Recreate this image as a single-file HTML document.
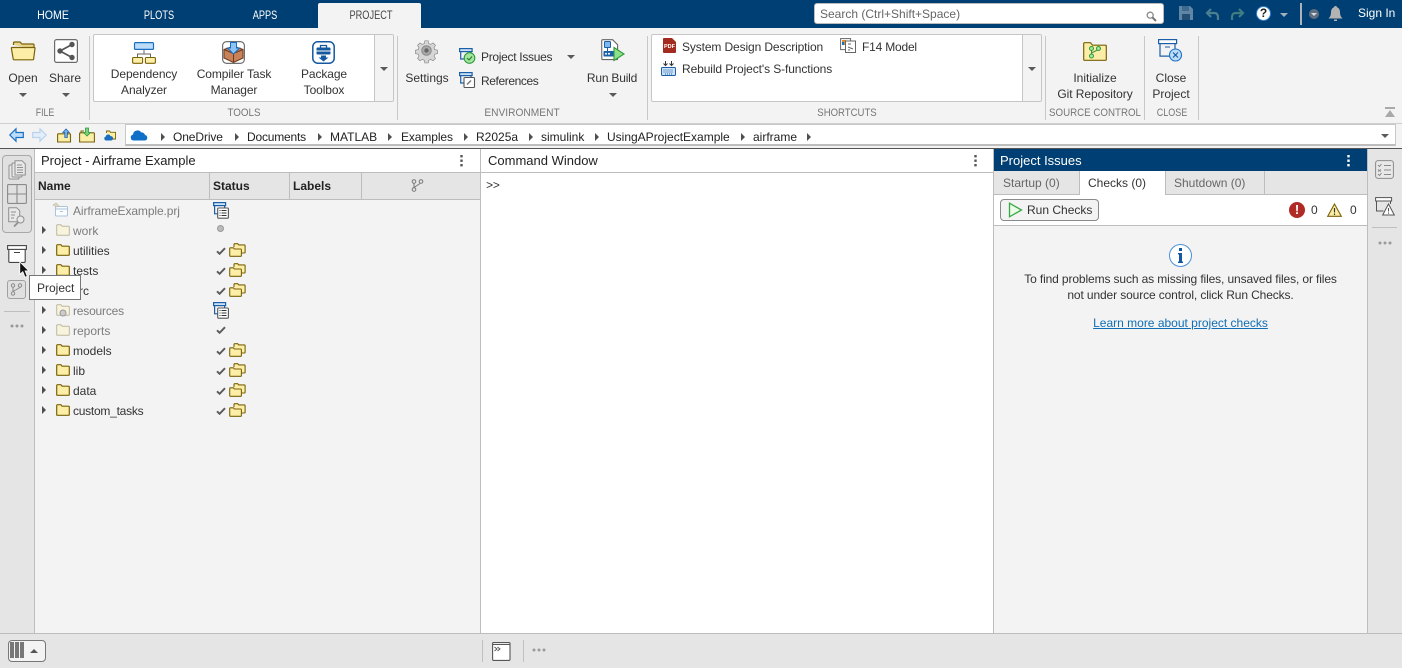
<!DOCTYPE html>
<html><head><meta charset="utf-8">
<style>
*{box-sizing:border-box}
html,body{margin:0;padding:0;width:1402px;height:668px;overflow:hidden;background:#f3f3f3;font-family:"Liberation Sans",sans-serif;font-size:12px;color:#333}
.a{position:absolute}
.t{position:absolute;white-space:nowrap;line-height:16px;height:16px}
.c{transform:translateX(-50%);text-align:center}
.g{color:#5f5f5f}
.d{color:#7c7c7c}
.tab{color:#fff;font-size:11.5px;top:8px}
.sec{top:105px;font-size:11px;color:#777}
.h{font-size:13px;color:#222}
svg{position:absolute;overflow:visible}
.tri{position:absolute;width:0;height:0;border-left:4px solid transparent;border-right:4px solid transparent;border-top:4px solid #5a5a5a}
.sep{position:absolute;width:1px;background:#c8c8c8}
.arr{position:absolute;width:0;height:0;border-top:4px solid transparent;border-bottom:4px solid transparent;border-left:4px solid #4f4f4f}
.col{position:absolute;top:173px;width:1px;height:26px;background:#bdbdbd}
</style></head>
<body>
<svg width="0" height="0" style="position:absolute">
<defs>
<symbol id="folder" viewBox="0 0 14 12"><path d="M.7 11.300V1.600c0-.5.3-.9.8-.9h3.400l1.200 1.500h6.400c.5 0 .8.300.8.800v7.500c0 .5-.3.800-.8.800H1.400c-.4 0-.7-.2-.7-.6z" fill="#fdeea7" stroke="#7a6208" stroke-width="1.200"/></symbol>
<symbol id="folderg" viewBox="0 0 14 12"><path d="M.7 11.300V1.600c0-.5.3-.9.8-.9h3.400l1.200 1.500h6.400c.5 0 .8.300.8.800v7.500c0 .5-.3.800-.8.800H1.400c-.4 0-.7-.2-.7-.6z" fill="#f8f3dc" stroke="#bdb89f" stroke-width="1"/></symbol>
<symbol id="dbl" viewBox="0 0 17 14"><path d="M5 4V1.500c0-.4.3-.8.7-.8h3l1 1.200h5.600c.5 0 .8.300.8.800v6.600c0 .4-.3.700-.8.700H13" fill="#fdeea7" stroke="#7a6208" stroke-width="1.100"/><path d="M.7 12.600V5.500c0-.4.3-.7.700-.7h3l1 1.200h6.200c.5 0 .8.300.8.800v5.800c0 .4-.3.700-.8.700H1.400c-.4 0-.7-.2-.7-.7z" fill="#fdeea7" stroke="#7a6208" stroke-width="1.100"/></symbol>
<symbol id="chk" viewBox="0 0 10 8"><path d="M1 4.300l2.600 2.500L9 1.200" fill="none" stroke="#5a5a5a" stroke-width="1.900"/></symbol>
<symbol id="stat" viewBox="0 0 16 17"><rect x=".6" y=".6" width="12" height="3" fill="#cfe3f7" stroke="#1b5fa8" stroke-width="1.200"/><path d="M1.600 3.600v8.200h4" fill="none" stroke="#1b5fa8" stroke-width="1.200"/><path d="M11.600 3.600v2" fill="none" stroke="#1b5fa8" stroke-width="1.200"/><rect x="4.700" y="6" width="10.700" height="10.200" rx="1" fill="#fff" stroke="#555" stroke-width="1.100"/><path d="M6.500 8.500h1M8.500 8.500h5M6.500 11h1M8.500 11h5M6.500 13.500h1M8.500 13.500h5" stroke="#333" stroke-width="1"/></symbol>
<symbol id="dots" viewBox="0 0 14 4"><circle cx="2" cy="2" r="1.500" fill="#9a9a9a"/><circle cx="7" cy="2" r="1.500" fill="#9a9a9a"/><circle cx="12" cy="2" r="1.500" fill="#9a9a9a"/></symbol>
</defs>
</svg>

<!-- top bar -->
<div class="a" style="left:0;top:0;width:1402px;height:28px;background:#003f73"></div>
<div class="a" style="left:318px;top:3px;width:103px;height:25px;background:#f3f3f3;border-radius:2px 2px 0 0"></div>
<div class="t tab" style="left:53px;transform:translateX(-50%) scaleX(.92)">HOME</div>
<div class="t tab" style="left:159px;transform:translateX(-50%) scaleX(.8)">PLOTS</div>
<div class="t tab" style="left:265px;transform:translateX(-50%) scaleX(.8)">APPS</div>
<div class="t tab" style="left:371px;color:#444;transform:translateX(-50%) scaleX(.8)">PROJECT</div>
<div class="a" style="left:814px;top:3px;width:350px;height:21px;background:#fff;border:1px solid #bbb;border-radius:3px"></div>
<div class="t" style="left:820px;top:6px;color:#666">Search (Ctrl+Shift+Space)</div>
<svg style="left:1146px;top:11px" width="11" height="11" viewBox="0 0 11 11"><circle cx="4.200" cy="4.200" r="3" fill="none" stroke="#8a8a8a" stroke-width="1.300"/><path d="M6.500 6.500l3.500 3.500" stroke="#777" stroke-width="2"/></svg>
<svg style="left:1179px;top:6px" width="14" height="14" viewBox="0 0 14 14"><path d="M0 0h11l3 3v11H0z" fill="#5f86a5"/><rect x="3" y="0" width="7" height="5" fill="#3e6a8f"/><rect x="3" y="8" width="8" height="6" fill="#234f77"/></svg>
<svg style="left:1206px;top:8px" width="14" height="13" viewBox="0 0 14 13"><path d="M5 1L1 5l4 4" fill="none" stroke="#4a7f90" stroke-width="2.200"/><path d="M2 5h6c3 0 4 2 4 4v3" fill="none" stroke="#4a7f90" stroke-width="2.200"/></svg>
<svg style="left:1230px;top:8px" width="14" height="13" viewBox="0 0 14 13"><path d="M9 1l4 4-4 4" fill="none" stroke="#3f7d80" stroke-width="2.200"/><path d="M12 5H6C3 5 2 7 2 9v3" fill="none" stroke="#3f7d80" stroke-width="2.200"/></svg>
<div class="a" style="left:1256px;top:6px;width:15px;height:15px;border-radius:50%;background:#fff;border:1.500px solid #2f7fd0;color:#222;font-weight:bold;font-size:12px;line-height:12px;text-align:center">?</div>
<div class="tri" style="left:1280px;top:13px;border-top-color:#9fb0be"></div>
<div class="a" style="left:1300px;top:3px;width:2px;height:22px;background:#a9b4bd"></div>
<div class="a" style="left:1309px;top:9px;width:10px;height:10px;border-radius:50%;background:#5f6f80"></div>
<div class="tri" style="left:1311px;top:13px;border-left-width:3px;border-right-width:3px;border-top:3px solid #d8dde2"></div>
<svg style="left:1328px;top:6px" width="15" height="15" viewBox="0 0 15 15"><path d="M7.500 0c1 0 1.500.7 1.500 1.300C11 2 12 4 12 6.500c0 2.500.8 4.500 2.500 6H.5C2.200 11 3 9 3 6.500 3 4 4 2 6 1.300 6 .7 6.500 0 7.500 0z" fill="#b3b3b3"/><path d="M6 13.500h3V15H6z" fill="#b3b3b3"/></svg>
<div class="t" style="left:1358px;top:5px;color:#fff">Sign In</div>

<!-- ribbon -->
<svg style="left:11px;top:41px" width="25" height="20" viewBox="0 0 25 20"><path d="M2.500 4V2c0-.6.400-1 1-1h5.500l2 2h11c.600 0 1 .4 1 1v4" fill="#e8d68e" stroke="#7a6208" stroke-width="1.200"/><path d="M.8 6.500h22.400c.5 0 .8.300.8.800L22.600 18c0 .5-.4.800-.9.800H3.200c-.5 0-.9-.3-1-.8L.4 7.300c0-.5.100-.8.400-.8z" fill="#fdeea7" stroke="#7a6208" stroke-width="1.200"/></svg>
<div class="t c" style="left:23px;top:70px">Open</div>
<div class="tri" style="left:19px;top:93px"></div>
<svg style="left:54px;top:39px" width="24" height="24" viewBox="0 0 24 24"><rect x=".6" y=".6" width="22.800" height="22.800" rx="2" fill="#fff" stroke="#6b6b6b" stroke-width="1.200"/><path d="M18 5.500L6 12l12 6.500" fill="none" stroke="#555" stroke-width="1.700"/><circle cx="18" cy="5.500" r="2.700" fill="#555"/><circle cx="6" cy="12" r="2.700" fill="#555"/><circle cx="18" cy="18.500" r="2.700" fill="#555"/></svg>
<div class="t c" style="left:65px;top:70px">Share</div>
<div class="tri" style="left:62px;top:93px"></div>
<div class="t sec" style="left:44.500px;transform:translateX(-50%) scaleX(.8)">FILE</div>
<div class="sep" style="left:89px;top:36px;height:84px"></div>

<div class="a" style="left:93px;top:34px;width:301px;height:68px;background:#fff;border:1px solid #c6c6c6;border-radius:2px"></div>
<div class="a" style="left:374px;top:35px;width:19px;height:66px;background:#f3f3f3;border-left:1px solid #c6c6c6;border-radius:0 2px 2px 0"></div>
<div class="tri" style="left:380px;top:67px"></div>
<svg style="left:132px;top:42px" width="24" height="22" viewBox="0 0 24 22"><rect x="2.500" y=".6" width="19" height="6.800" rx="1.200" fill="#bcdcfb" stroke="#1b6fc2" stroke-width="1.200"/><path d="M12 7.500v4.500M5.500 15.500V12h13v3.500" fill="none" stroke="#666"/><rect x=".6" y="15.500" width="10" height="5.800" rx="1" fill="#fdeea7" stroke="#7a6208" stroke-width="1.100"/><rect x="13.400" y="15.500" width="10" height="5.800" rx="1" fill="#fdeea7" stroke="#7a6208" stroke-width="1.100"/></svg>
<div class="t c" style="left:144px;top:66px;letter-spacing:-.1px">Dependency</div>
<div class="t c" style="left:144px;top:82px;letter-spacing:-.1px">Analyzer</div>
<svg style="left:222px;top:41px" width="23" height="23" viewBox="0 0 23 23"><rect x=".6" y=".6" width="21.800" height="21.800" rx="4" fill="#fff" stroke="#707070" stroke-width="1.200"/><path d="M2 8.500l9.500-3.500 9.500 3.500v8.500l-9.500 4.500L2 17z" fill="#c98158" stroke="#6d3b1e"/><path d="M2 8.500l9.500 4 9.500-4M11.500 12.500v9" fill="none" stroke="#6d3b1e"/><path d="M8.500 1.500h6v5.500h3l-6 6-6-6h3z" fill="#8cc4f5" stroke="#1b6fc2"/></svg>
<div class="t c" style="left:234px;top:66px;letter-spacing:-.1px">Compiler Task</div>
<div class="t c" style="left:234px;top:82px;letter-spacing:-.1px">Manager</div>
<svg style="left:312px;top:41px" width="23" height="23" viewBox="0 0 23 23"><rect x=".8" y=".8" width="21.400" height="21.400" rx="5" fill="#fff" stroke="#14589f" stroke-width="1.500"/><path d="M8.500 6.500V4.500h6v2" fill="none" stroke="#14589f" stroke-width="1.300"/><rect x="4.500" y="6.500" width="14" height="7" rx="1" fill="#14589f"/><path d="M4.500 10h14" stroke="#fff"/><path d="M9 14.500h5v2h2.500l-5 4-5-4H9z" fill="#14589f"/></svg>
<div class="t c" style="left:324px;top:66px;letter-spacing:-.1px">Package</div>
<div class="t c" style="left:324px;top:82px;letter-spacing:-.1px">Toolbox</div>
<div class="t sec" style="left:243.500px;transform:translateX(-50%) scaleX(.89)">TOOLS</div>
<div class="sep" style="left:397px;top:36px;height:84px"></div>

<svg style="left:415px;top:39px" width="23" height="23" viewBox="0 0 24 24"><path d="M10 .8h4l.6 3.100 2.300 1 2.700-1.700 2.800 2.800-1.700 2.700 1 2.300 3.100.6v4l-3.100.6-1 2.300 1.700 2.700-2.800 2.800-2.700-1.700-2.300 1-.6 3.100h-4l-.6-3.100-2.300-1-2.700 1.700-2.800-2.800 1.700-2.700-1-2.300-3.100-.6v-4l3.100-.6 1-2.300-1.700-2.700 2.800-2.800 2.700 1.700 2.300-1z" transform="translate(1.200 1.200) scale(.9)" fill="#d6d6d6" stroke="#8a8a8a" stroke-width=".8"/><circle cx="12" cy="12" r="5" fill="#a8a8a8" stroke="#888"/><circle cx="12" cy="12" r="2.300" fill="#666"/></svg>
<div class="t c" style="left:427px;top:70px">Settings</div>
<svg style="left:459px;top:48px" width="17" height="16" viewBox="0 0 17 16"><rect x=".6" y=".6" width="12.500" height="3" fill="#cfe3f7" stroke="#1b5fa8" stroke-width="1.200"/><path d="M1.700 3.600v7.400h4M12 3.600v1.500" fill="none" stroke="#1b5fa8" stroke-width="1.200"/><circle cx="10.500" cy="10" r="5.300" fill="#a5e6a0" stroke="#2e9a3a" stroke-width="1.100"/><path d="M8 10l2 2 3-3.500" fill="none" stroke="#1c7a2c" stroke-width="1.100"/></svg>
<div class="t" style="left:481px;top:49px;letter-spacing:-.3px">Project Issues</div>
<div class="tri" style="left:567px;top:55px"></div>
<svg style="left:459px;top:72px" width="17" height="16" viewBox="0 0 17 16"><rect x=".6" y=".6" width="12.500" height="3" fill="#cfe3f7" stroke="#1b5fa8" stroke-width="1.200"/><path d="M1.700 3.600v7.400h3M12 3.600v1.500" fill="none" stroke="#1b5fa8" stroke-width="1.200"/><rect x="5" y="5.500" width="10.500" height="10" rx="1" fill="#fff" stroke="#555" stroke-width="1.100"/><path d="M8 12.500l4-4" stroke="#777" stroke-width="1.500"/></svg>
<div class="t" style="left:481px;top:73px;letter-spacing:-.4px">References</div>
<svg style="left:601px;top:39px" width="24" height="23" viewBox="0 0 24 23"><path d="M.7 1.600c0-.5.4-.9.900-.9h10l5 5v14c0 .5-.4.900-.9.900h-14c-.5 0-.9-.4-.9-.9z" fill="#fff" stroke="#666" stroke-width="1.100"/><rect x="3.500" y="2.500" width="6" height="6" rx=".8" fill="#7fb8ee" stroke="#1b5fa8"/><path d="M6.500 8.500v4" stroke="#1b5fa8"/><rect x="2.500" y="12" width="11" height="5.500" rx=".8" fill="#1b5fa8"/><circle cx="5" cy="14.700" r="1" fill="#fff"/><circle cx="8" cy="14.700" r="1" fill="#fff"/><path d="M13 8.500l10 6.500-10 6.500z" fill="#8fe08a" stroke="#2e9a3a" stroke-width="1.100"/></svg>
<div class="t c" style="left:612px;top:70px;letter-spacing:-.2px">Run Build</div>
<div class="tri" style="left:609px;top:93px"></div>
<div class="t sec" style="left:522px;transform:translateX(-50%) scaleX(.927)">ENVIRONMENT</div>
<div class="sep" style="left:647px;top:36px;height:84px"></div>

<div class="a" style="left:651px;top:34px;width:391px;height:68px;background:#fff;border:1px solid #c6c6c6;border-radius:2px"></div>
<div class="a" style="left:1022px;top:35px;width:19px;height:66px;background:#f3f3f3;border-left:1px solid #c6c6c6;border-radius:0 2px 2px 0"></div>
<div class="tri" style="left:1028px;top:67px"></div>
<svg style="left:663px;top:38px" width="13" height="15" viewBox="0 0 13 15"><path d="M1 0h8l4 4v10c0 .6-.4 1-1 1H1c-.6 0-1-.4-1-1V1c0-.6.400-1 1-1z" fill="#a32a1f"/><text x="6.500" y="10" font-family="Liberation Sans" font-size="5.500" font-weight="bold" fill="#fff" text-anchor="middle">PDF</text></svg>
<div class="t" style="left:682px;top:39px;letter-spacing:-.12px">System Design Description</div>
<svg style="left:840px;top:38px" width="16" height="15" viewBox="0 0 16 15"><rect x=".6" y=".6" width="10" height="11" fill="#fff" stroke="#666"/><rect x="2" y="2" width="4" height="5" fill="#e08a2a"/><rect x="2" y="4" width="2" height="3" fill="#1b6fc2"/><rect x="5.500" y="3" width="10" height="11.500" fill="#fff" stroke="#666"/><path d="M8 6h3M8 9l5 2M8 12h2" stroke="#666"/></svg>
<div class="t" style="left:862px;top:39px;letter-spacing:-.2px">F14 Model</div>
<svg style="left:661px;top:61px" width="15" height="15" viewBox="0 0 15 15"><path d="M4.500 0v4M2.500 2.500l2 2 2-2M10.500 0v4M8.500 2.500l2 2 2-2" fill="none" stroke="#333"/><rect x=".5" y="6.500" width="14" height="8" rx="1" fill="#cfe3f7" stroke="#1b5fa8"/><path d="M2.500 9h10M2.500 11h10M4 13h7" stroke="#1b5fa8" stroke-dasharray="1 1"/></svg>
<div class="t" style="left:682px;top:61px;letter-spacing:-.1px">Rebuild Project's S-functions</div>
<div class="t sec" style="left:846.500px;transform:translateX(-50%) scaleX(.87)">SHORTCUTS</div>
<div class="sep" style="left:1045px;top:36px;height:84px"></div>

<svg style="left:1083px;top:42px" width="24" height="19" viewBox="0 0 24 19"><path d="M.7 17.500V1.600c0-.5.3-.9.800-.9h6l2 2.500h13c.5 0 .8.300.8.800v13.500c0 .5-.3.800-.8.800H1.400c-.4 0-.7-.3-.7-.8z" fill="#fdeea7" stroke="#7a6208" stroke-width="1.200"/><path d="M8.500 8v5M8.500 11l6-3" fill="none" stroke="#4a8a4a"/><circle cx="8.500" cy="6.500" r="2" fill="#a5e6a0" stroke="#2e9a3a"/><circle cx="8.500" cy="14" r="2" fill="#a5e6a0" stroke="#2e9a3a"/><circle cx="15.500" cy="6.500" r="2" fill="#a5e6a0" stroke="#2e9a3a"/></svg>
<div class="t c" style="left:1095px;top:70px">Initialize</div>
<div class="t c" style="left:1095px;top:86px;letter-spacing:-.05px">Git Repository</div>
<div class="t sec" style="left:1095px;transform:translateX(-50%) scaleX(.885)">SOURCE CONTROL</div>
<div class="sep" style="left:1144px;top:36px;height:84px"></div>
<svg style="left:1158px;top:39px" width="25" height="24" viewBox="0 0 25 24"><rect x=".6" y=".6" width="18" height="4" fill="#fff" stroke="#1b5fa8" stroke-width="1.200"/><path d="M2 4.600v12.500h10M17 4.600v5" fill="none" stroke="#1b5fa8" stroke-width="1.200"/><path d="M7 8h5" stroke="#1b5fa8"/><circle cx="17.500" cy="16" r="6" fill="#bcdcfb" stroke="#1b6fc2" stroke-width="1.100"/><path d="M15 13.500l5 5M20 13.500l-5 5" stroke="#14589f" stroke-width="1.100"/></svg>
<div class="t c" style="left:1171px;top:70px">Close</div>
<div class="t c" style="left:1171px;top:86px">Project</div>
<div class="t sec" style="left:1171.500px;transform:translateX(-50%) scaleX(.82)">CLOSE</div>
<div class="sep" style="left:1198px;top:36px;height:84px"></div>
<div class="a" style="left:1385px;top:107px;width:10px;height:2px;background:#a9a9a9"></div>
<div class="tri" style="left:1385px;top:110px;border-left-width:5px;border-right-width:5px;border-top:0;border-bottom:7px solid #a9a9a9"></div>

<!-- address bar -->
<div class="a" style="left:0;top:123px;width:1402px;height:1px;background:#cfcfcf"></div>
<svg style="left:9px;top:128px" width="15" height="14" viewBox="0 0 15 14"><path d="M7 .8L.8 7 7 13.200V9.500h7.300v-5H7z" fill="#bcdcfb" stroke="#1b6fc2" stroke-width="1.200"/></svg>
<svg style="left:32px;top:128px" width="15" height="14" viewBox="0 0 15 14"><path d="M8 .8L14.200 7 8 13.200V9.500H.7v-5H8z" fill="#e3eefa" stroke="#b9d2ee" stroke-width="1.200"/></svg>
<svg style="left:57px;top:128px" width="14" height="15" viewBox="0 0 14 15"><path d="M.6 14V6.500c0-.4.300-.7.700-.7h11.500c.4 0 .7.300.7.700V14z" fill="#fdeea7" stroke="#7a6208" stroke-width="1.100"/><path d="M9 1L5.800 4.500h2v5h2.500v-5h2z" fill="#7fb8ee" stroke="#1b5fa8" stroke-width=".8"/></svg>
<svg style="left:79px;top:127px" width="16" height="16" viewBox="0 0 16 16"><path d="M.6 15V6.500c0-.4.300-.7.700-.7h13.400c.4 0 .7.300.7.700V15z" fill="#fdeea7" stroke="#7a6208" stroke-width="1.100"/><path d="M2 5.500V4h3" fill="none" stroke="#7a6208"/><path d="M8 9L4.500 5.500h2V1h3v4.500h2z" fill="#7ed17a" stroke="#2e9a3a" stroke-width=".8"/></svg>
<svg style="left:104px;top:130px" width="12" height="11" viewBox="0 0 12 11"><path d="M2.500 3V1h3l1 1.300h5V9H8" fill="#fdeea7" stroke="#7a6208" stroke-width=".9"/><path d="M2 10.500a2 2 0 0 1-.3-3.900 2.500 2.500 0 0 1 4.800-.5 2.200 2.200 0 0 1 .7 4.400z" fill="#1b6fc2"/></svg>
<div class="a" style="left:125px;top:124px;width:1271px;height:22px;background:#fff;border:1px solid #c8c8c8;border-bottom:2px solid #bdbdbd"></div>
<svg style="left:130px;top:129px" width="18" height="12" viewBox="0 0 18 12"><path d="M3.500 11.500a3 3 0 0 1-.5-5.900 4.500 4.500 0 0 1 8.200-2.200 3.500 3.500 0 0 1 3.800 2.600 2.800 2.800 0 0 1 0 5.500z" fill="#0d6fc7"/></svg>
<div class="arr" style="left:161px;top:133px"></div>
<div class="t" style="left:173px;top:129px;color:#222;letter-spacing:-.1px">OneDrive</div>
<div class="arr" style="left:235px;top:133px"></div>
<div class="t" style="left:247px;top:129px;color:#222;letter-spacing:-.2px">Documents</div>
<div class="arr" style="left:318px;top:133px"></div>
<div class="t" style="left:330px;top:129px;color:#222">MATLAB</div>
<div class="arr" style="left:388px;top:133px"></div>
<div class="t" style="left:401px;top:129px;color:#222;letter-spacing:-.1px">Examples</div>
<div class="arr" style="left:464px;top:133px"></div>
<div class="t" style="left:476px;top:129px;color:#222">R2025a</div>
<div class="arr" style="left:529px;top:133px"></div>
<div class="t" style="left:541px;top:129px;color:#222">simulink</div>
<div class="arr" style="left:595px;top:133px"></div>
<div class="t" style="left:607px;top:129px;color:#222">UsingAProjectExample</div>
<div class="arr" style="left:741px;top:133px"></div>
<div class="t" style="left:753px;top:129px;color:#222">airframe</div>
<div class="arr" style="left:807px;top:133px"></div>
<div class="tri" style="left:1381px;top:134px"></div>

<!-- main -->
<div class="a" style="left:0;top:148px;width:1402px;height:1px;background:#555"></div>
<div class="a" style="left:0;top:149px;width:35px;height:484px;background:#e5e5e5;border-right:1px solid #bdbdbd"></div>
<div class="a" style="left:1367px;top:149px;width:35px;height:484px;background:#e5e5e5;border-left:1px solid #bdbdbd"></div>

<!-- left sidebar -->
<div class="a" style="left:2px;top:155px;width:30px;height:78px;border:1px solid #a8a8a8;border-radius:4px;background:#e0e0e0"></div>
<svg style="left:8px;top:160px" width="18" height="20" viewBox="0 0 18 20" fill="#e8e8e8" stroke="#8f8f8f"><rect x="1" y="5" width="10" height="14" rx="1"/><rect x="4" y="3" width="10" height="14" rx="1"/><path d="M7 .7h7l3.300 3.300v11H7z"/><path d="M9 5h5M9 7.500h6M9 10h6M9 12.500h6" fill="none"/></svg>
<svg style="left:7px;top:184px" width="20" height="20" viewBox="0 0 20 20" fill="none" stroke="#8a8a8a" stroke-width="1.100"><rect x=".6" y=".6" width="18.800" height="18.800" rx="1"/><path d="M10 .6v18.800M.6 10h18.800"/></svg>
<svg style="left:8px;top:207px" width="19" height="21" viewBox="0 0 19 21" fill="none" stroke="#8f8f8f"><path d="M.7.7h8l3 3v11H.7z" fill="#e8e8e8"/><path d="M3 5h5M3 8h4M3 11h3"/><circle cx="12.500" cy="12.500" r="3.500" fill="#e8e8e8"/><path d="M10 15.500L6 19.500" stroke-width="1.800"/></svg>
<svg style="left:7px;top:245px" width="20" height="18" viewBox="0 0 20 18"><rect x="1.800" y="4" width="16.400" height="13.400" rx="1" fill="#fff" stroke="#444" stroke-width="1.100"/><rect x=".6" y=".6" width="18.800" height="3.800" fill="#fff" stroke="#444" stroke-width="1.100"/><path d="M7 7.500h6" stroke="#444"/></svg>
<div class="a" style="left:7px;top:280px;width:19px;height:19px;border:1px solid #a0a0a0;border-radius:3px;background:#e0e0e0"></div>
<svg style="left:10px;top:283px" width="13" height="13" viewBox="0 0 13 13" fill="none" stroke="#8a8a8a"><circle cx="3" cy="2.500" r="1.700"/><circle cx="3" cy="10.500" r="1.700"/><circle cx="10" cy="2.500" r="1.700"/><path d="M3 4.500v4M3 8.500l7-4"/></svg>
<div class="a" style="left:4px;top:311px;width:26px;height:1px;background:#bfbfbf"></div>
<svg style="left:10px;top:324px" width="14" height="4"><use href="#dots"/></svg>

<!-- Project panel -->
<div class="a" style="left:35px;top:149px;width:445px;height:24px;background:#fff;border-bottom:1px solid #bdbdbd"></div>
<div class="t h" style="left:41px;top:153px">Project - Airframe Example</div>
<svg style="left:460px;top:155px" width="3" height="12" viewBox="0 0 3 12" fill="#555"><rect x=".3" y="0" width="2.400" height="2.400"/><rect x=".3" y="4.500" width="2.400" height="2.400"/><rect x=".3" y="9" width="2.400" height="2.400"/></svg>
<div class="a" style="left:35px;top:173px;width:445px;height:27px;background:#e5e5e5;border-bottom:1px solid #bdbdbd"></div>
<div class="t" style="left:38px;top:178px;font-weight:bold;color:#222">Name</div>
<div class="col" style="left:209px"></div>
<div class="t" style="left:213px;top:178px;font-weight:bold;color:#222">Status</div>
<div class="col" style="left:289px"></div>
<div class="t" style="left:293px;top:178px;font-weight:bold;color:#222">Labels</div>
<div class="col" style="left:361px"></div>
<svg style="left:411px;top:179px" width="13" height="13" viewBox="0 0 13 13" fill="none" stroke="#777"><circle cx="3" cy="2.500" r="1.800"/><circle cx="3" cy="10.500" r="1.800"/><circle cx="10" cy="2.500" r="1.800"/><path d="M3 4.500v4M3 8.500l6-4"/></svg>
<div class="a" style="left:480px;top:149px;width:1px;height:484px;background:#bdbdbd"></div>

<!-- tree -->
<svg style="left:53px;top:202px" width="15" height="15" viewBox="0 0 15 15"><rect x="2.500" y="4.500" width="12" height="9.500" rx="1" fill="#fbfdff" stroke="#a9c3de"/><path d="M2.500 7h12M7 9.500h3" stroke="#a9c3de"/><path d="M0 3l3-2 3 3-2 1z" fill="#e0d8b8" stroke="#b8b8b8" stroke-width=".6"/></svg>
<div class="t d" style="left:73px;top:203px;letter-spacing:-.1px">AirframeExample.prj</div>
<svg style="left:213px;top:202px" width="16" height="17"><use href="#stat"/></svg>

<div class="arr" style="left:42px;top:226px"></div>
<svg style="left:56px;top:224px" width="14" height="12"><use href="#folderg"/></svg>
<div class="t d" style="left:73px;top:223px">work</div>
<div class="a" style="left:217px;top:225px;width:7px;height:7px;border-radius:50%;background:#bbb;border:1px solid #999"></div>

<div class="arr" style="left:42px;top:246px"></div>
<svg style="left:56px;top:244px" width="14" height="12"><use href="#folder"/></svg>
<div class="t" style="left:73px;top:243px">utilities</div>
<svg style="left:216px;top:247px" width="10" height="8"><use href="#chk"/></svg>
<svg style="left:229px;top:243px" width="17" height="14"><use href="#dbl"/></svg>

<div class="arr" style="left:42px;top:266px"></div>
<svg style="left:56px;top:264px" width="14" height="12"><use href="#folder"/></svg>
<div class="t" style="left:73px;top:263px">tests</div>
<svg style="left:216px;top:267px" width="10" height="8"><use href="#chk"/></svg>
<svg style="left:229px;top:263px" width="17" height="14"><use href="#dbl"/></svg>

<svg style="left:216px;top:287px" width="10" height="8"><use href="#chk"/></svg>
<svg style="left:229px;top:283px" width="17" height="14"><use href="#dbl"/></svg>

<div class="arr" style="left:42px;top:306px"></div>
<svg style="left:56px;top:304px" width="14" height="12"><use href="#folderg"/></svg>
<svg style="left:59px;top:309px" width="8" height="8"><circle cx="4" cy="4" r="3" fill="#ccc" stroke="#999"/></svg>
<div class="t d" style="left:73px;top:303px;letter-spacing:-.2px">resources</div>
<svg style="left:213px;top:302px" width="16" height="17"><use href="#stat"/></svg>

<div class="arr" style="left:42px;top:326px"></div>
<svg style="left:56px;top:324px" width="14" height="12"><use href="#folderg"/></svg>
<div class="t d" style="left:73px;top:323px">reports</div>
<svg style="left:216px;top:326px" width="10" height="8"><use href="#chk"/></svg>

<div class="arr" style="left:42px;top:346px"></div>
<svg style="left:56px;top:344px" width="14" height="12"><use href="#folder"/></svg>
<div class="t" style="left:73px;top:343px">models</div>
<svg style="left:216px;top:347px" width="10" height="8"><use href="#chk"/></svg>
<svg style="left:229px;top:343px" width="17" height="14"><use href="#dbl"/></svg>

<div class="arr" style="left:42px;top:366px"></div>
<svg style="left:56px;top:364px" width="14" height="12"><use href="#folder"/></svg>
<div class="t" style="left:73px;top:363px">lib</div>
<svg style="left:216px;top:367px" width="10" height="8"><use href="#chk"/></svg>
<svg style="left:229px;top:363px" width="17" height="14"><use href="#dbl"/></svg>

<div class="arr" style="left:42px;top:386px"></div>
<svg style="left:56px;top:384px" width="14" height="12"><use href="#folder"/></svg>
<div class="t" style="left:73px;top:383px">data</div>
<svg style="left:216px;top:387px" width="10" height="8"><use href="#chk"/></svg>
<svg style="left:229px;top:383px" width="17" height="14"><use href="#dbl"/></svg>

<div class="arr" style="left:42px;top:406px"></div>
<svg style="left:56px;top:404px" width="14" height="12"><use href="#folder"/></svg>
<div class="t" style="left:73px;top:403px;letter-spacing:-.25px">custom_tasks</div>
<svg style="left:216px;top:407px" width="10" height="8"><use href="#chk"/></svg>
<svg style="left:229px;top:403px" width="17" height="14"><use href="#dbl"/></svg>

<!-- tooltip row items -->
<div class="arr" style="left:42px;top:286px"></div>
<svg style="left:56px;top:284px" width="14" height="12"><use href="#folder"/></svg>
<div class="t" style="left:73px;top:283px">src</div>
<div class="a" style="left:29px;top:275px;width:52px;height:25px;background:#fff;border:1px solid #767676"></div>
<div class="t" style="left:37px;top:280px;color:#333">Project</div>
<svg style="left:19px;top:261px" width="11" height="17" viewBox="0 0 11 17"><path d="M.8.800v12.500l3-2.600 2.200 5.500 2.300-.9-2.200-5.400H9.800z" fill="#111" stroke="#fff" stroke-width=".8"/></svg>

<!-- command window -->
<div class="a" style="left:481px;top:149px;width:512px;height:484px;background:#fff"></div>
<div class="a" style="left:481px;top:172px;width:512px;height:1px;background:#bdbdbd"></div>
<div class="t h" style="left:488px;top:153px">Command Window</div>
<svg style="left:974px;top:155px" width="3" height="12" viewBox="0 0 3 12" fill="#555"><rect x=".3" y="0" width="2.400" height="2.400"/><rect x=".3" y="4.500" width="2.400" height="2.400"/><rect x=".3" y="9" width="2.400" height="2.400"/></svg>
<div class="t" style="left:486px;top:178px;color:#333;font-family:'Liberation Mono',monospace;font-size:12px;letter-spacing:-.5px">&gt;&gt;</div>
<div class="a" style="left:993px;top:149px;width:1px;height:484px;background:#bdbdbd"></div>

<!-- project issues -->
<div class="a" style="left:994px;top:149px;width:373px;height:22px;background:#003f73"></div>
<div class="t h" style="left:1000px;top:153px;color:#fff">Project Issues</div>
<svg style="left:1347px;top:155px" width="3" height="12" viewBox="0 0 3 12" fill="#fff"><rect x=".3" y="0" width="2.400" height="2.400"/><rect x=".3" y="4.500" width="2.400" height="2.400"/><rect x=".3" y="9" width="2.400" height="2.400"/></svg>
<div class="a" style="left:994px;top:171px;width:373px;height:24px;background:#e5e5e5;border-bottom:1px solid #bdbdbd"></div>
<div class="a" style="left:1079px;top:171px;width:87px;height:25px;background:#fff;border-left:1px solid #bdbdbd;border-right:1px solid #bdbdbd"></div>
<div class="a" style="left:1264px;top:171px;width:1px;height:24px;background:#bdbdbd"></div>
<div class="t" style="left:1003px;top:175px;color:#666">Startup (0)</div>
<div class="t" style="left:1088px;top:175px;color:#333">Checks (0)</div>
<div class="t" style="left:1174px;top:175px;color:#666">Shutdown (0)</div>
<div class="a" style="left:994px;top:195px;width:373px;height:31px;background:#fff;border-bottom:1px solid #bdbdbd"></div>
<div class="a" style="left:1000px;top:199px;width:99px;height:22px;background:#f3f3f3;border:1px solid #8a8a8a;border-radius:4px"></div>
<svg style="left:1008px;top:202px" width="15" height="16" viewBox="0 0 15 16"><path d="M1.500 1.200l12 6.800-12 6.800z" fill="#eafbe8" stroke="#3aa845" stroke-width="1.300"/></svg>
<div class="t" style="left:1027px;top:202px;color:#333">Run Checks</div>
<div class="a" style="left:1289px;top:202px;width:16px;height:16px;border-radius:50%;background:#b02a26;color:#fff;font-weight:bold;font-size:13px;line-height:16px;text-align:center">!</div>
<div class="t" style="left:1311px;top:202px;color:#333">0</div>
<svg style="left:1327px;top:203px" width="15" height="14" viewBox="0 0 15 14"><path d="M7.500 1l6.800 12.300H.7z" fill="#fdeea7" stroke="#7a6208" stroke-width="1.100"/><path d="M7.500 5v4.500M7.500 10.500v1.500" stroke="#333" stroke-width="1.200"/></svg>
<div class="t" style="left:1350px;top:202px;color:#333">0</div>
<div class="a" style="left:1169px;top:244px;width:23px;height:23px;border-radius:50%;background:#fff;border:1.300px solid #4a90d9"></div>
<svg style="left:1178px;top:248px" width="5" height="15" viewBox="0 0 5 15" fill="#14589f"><rect x="1" y="0" width="3" height="3"/><path d="M0 5h4v8.500h1V15H0v-1.500h1V6.500H0z"/></svg>
<div class="t c" style="left:1180.500px;top:271px;color:#333;letter-spacing:-.12px">To find problems such as missing files, unsaved files, or files</div>
<div class="t c" style="left:1180.500px;top:287px;color:#333;letter-spacing:-.12px">not under source control, click Run Checks.</div>
<div class="t c" style="left:1180.500px;top:315px;color:#0f6eb5;text-decoration:underline">Learn more about project checks</div>

<!-- right sidebar -->
<svg style="left:1375px;top:160px" width="19" height="19" viewBox="0 0 19 19" fill="none" stroke="#8a8a8a"><rect x=".6" y=".6" width="17.800" height="17.800" rx="2.500" fill="#e8e8e8"/><path d="M3 5l1.500 1.500L6.500 4M3 9.500l3 2M6 9.500l-3 2M3 14l1.500 1.500L6.500 13M9 5.500h7M9 10h7M9 14.500h7"/></svg>
<svg style="left:1375px;top:197px" width="20" height="19" viewBox="0 0 20 19"><rect x=".6" y=".6" width="16" height="3.400" fill="#fff" stroke="#555"/><path d="M1.500 4v10h7M15.500 4v3" fill="none" stroke="#555"/><path d="M13.500 7l5.800 11H7.700z" fill="#fff" stroke="#555"/><path d="M13.500 11v3.500M13.500 15.500v1.200" stroke="#555"/></svg>
<div class="a" style="left:1372px;top:227px;width:25px;height:1px;background:#bfbfbf"></div>
<svg style="left:1378px;top:241px" width="14" height="4"><use href="#dots"/></svg>

<!-- bottom bar -->
<div class="a" style="left:0;top:633px;width:1402px;height:35px;background:#e5e5e5;border-top:1px solid #bdbdbd"></div>
<div class="a" style="left:8px;top:640px;width:38px;height:22px;background:#f3f3f3;border:1px solid #777;border-radius:4px"></div>
<div class="a" style="left:10px;top:642px;width:4px;height:16px;background:#777"></div>
<div class="a" style="left:15px;top:642px;width:4px;height:16px;background:#777"></div>
<div class="a" style="left:20px;top:642px;width:4px;height:16px;background:#777"></div>
<div class="tri" style="left:30px;top:649px;border-top:0;border-bottom:4px solid #555"></div>
<div class="a" style="left:482px;top:640px;width:1px;height:22px;background:#c0c0c0"></div>
<svg style="left:492px;top:642px" width="19" height="19" viewBox="0 0 19 19"><rect x=".6" y=".6" width="17.400" height="17.800" rx="1" fill="#fff" stroke="#555" stroke-width="1.100"/><path d="M.6 2.500h17" stroke="#555"/><path d="M2.500 5l2.500 2-2.500 2M5.500 5l2.500 2-2.500 2" fill="none" stroke="#555"/></svg>
<div class="a" style="left:523px;top:640px;width:1px;height:22px;background:#c0c0c0"></div>
<svg style="left:532px;top:648px" width="14" height="4"><use href="#dots"/></svg>
</body></html>
